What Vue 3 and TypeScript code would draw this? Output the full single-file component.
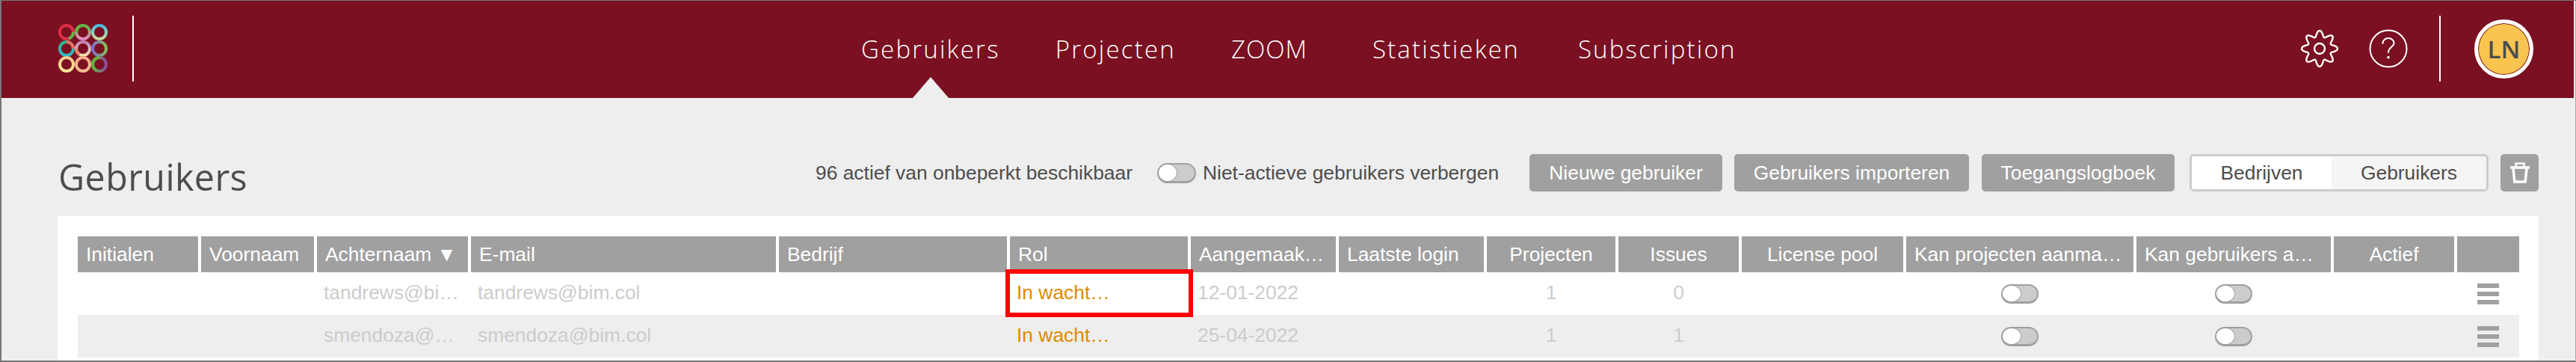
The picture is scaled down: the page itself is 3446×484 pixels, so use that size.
<script setup lang="ts">
const nav: string[] = ['Gebruikers', 'Projecten', 'ZOOM', 'Statistieken', 'Subscription']
const columns: { label: string; center?: boolean }[] = [
  { label: 'Initialen' },
  { label: 'Voornaam' },
  { label: 'Achternaam ▼' },
  { label: 'E-mail' },
  { label: 'Bedrijf' },
  { label: 'Rol' },
  { label: 'Aangemaak…' },
  { label: 'Laatste login' },
  { label: 'Projecten', center: true },
  { label: 'Issues', center: true },
  { label: 'License pool', center: true },
  { label: 'Kan projecten aanma…' },
  { label: 'Kan gebruikers a…' },
  { label: 'Actief', center: true },
  { label: '', center: true },
]
const rows = [
  { name: 'tandrews@bi…', mail: 'tandrews@bim.col', date: '12-01-2022', projects: 1, issues: 0 },
  { name: 'smendoza@…', mail: 'smendoza@bim.col', date: '25-04-2022', projects: 1, issues: 1 },
]
const rings = [
  { cx: 89, cy: 43, a: '#e0283f', b: '#d8384f', x2: 1, y2: 1 },
  { cx: 111, cy: 43, a: '#62b445', b: '#e58fc0', x2: 0, y2: 1 },
  { cx: 133, cy: 43, a: '#45bde0', b: '#c9dca0', x2: 0, y2: 1 },
  { cx: 89, cy: 65, a: '#2cb88a', b: '#2fb8c8', x2: 0, y2: 1 },
  { cx: 111, cy: 65, a: '#c77fb8', b: '#f0e2b0', x2: 0, y2: 1 },
  { cx: 133, cy: 65, a: '#7a6fc8', b: '#84c05a', x2: 1, y2: 0 },
  { cx: 89, cy: 86, a: '#f5c98f', b: '#fde596', x2: 0, y2: 1 },
  { cx: 111, cy: 86, a: '#f3a98a', b: '#f8bd94', x2: 0, y2: 1 },
  { cx: 133, cy: 86, a: '#62b445', b: '#8d4a9b', x2: 1, y2: 0 },
]
const arcs = [
  { d: 'M111 34A9 9 0 0 0 102 43', c: '#62b445' },
  { d: 'M98 43A9 9 0 0 1 92 51.500', c: '#62b445' },
  { d: 'M89 56A9 9 0 0 1 98 65', c: '#ee6f62' },
  { d: 'M102 65A9 9 0 0 0 107 73', c: '#ee7f6a' },
  { d: 'M133 77A9 9 0 0 0 124 86A9 9 0 0 0 129 94', c: '#62b445' },
]
const gear: string = (() => {
  const pts: string[] = []
  for (let i = 0; i < 240; i++) {
    const t = (i / 240) * Math.PI * 2
    const r = 20 + 4 * Math.cos(8 * t)
    pts.push(`${(26 + r * Math.sin(t)).toFixed(2)} ${(26 - r * Math.cos(t)).toFixed(2)}`)
  }
  return `M${pts.join('L')}Z`
})()
</script>

<template>
  <div class="page">
    <header class="topbar">
      <div class="brand">
        <svg class="logo" viewBox="76 21 70 88" width="70" height="88">
          <defs>
            <linearGradient v-for="(r, i) in rings" :id="`lg${i}`" :key="i" x1="0" y1="0" :x2="r.x2" :y2="r.y2">
              <stop offset="0" :stop-color="r.a" />
              <stop offset="1" :stop-color="r.b" />
            </linearGradient>
          </defs>
          <circle v-for="(r, i) in rings" :key="i" :cx="r.cx" :cy="r.cy" r="9" fill="none" :stroke="`url(#lg${i})`" stroke-width="4" />
          <path v-for="a in arcs" :key="a.d" :d="a.d" fill="none" :stroke="a.c" stroke-width="4" />
        </svg>
      </div>
      <nav class="nav">
        <a v-for="(n, i) in nav" :key="n" class="nav-item" :class="{ active: i === 0 }">{{ n }}</a>
      </nav>
      <div class="tools">
        <svg width="52" height="52" viewBox="0 0 52 52" fill="none" stroke="#fff" stroke-width="2.400">
          <circle cx="26" cy="26" r="7" />
          <path :d="gear" />
        </svg>
        <svg class="help" width="52" height="52" viewBox="0 0 52 52" fill="none" stroke="#fff" stroke-width="2" stroke-linecap="round">
          <circle cx="26" cy="26" r="24.500" />
          <path d="M18.500 19c0-4 3.400-7 7.500-7s7.500 3 7.500 6.500c0 5-7.500 6-7.500 12.500" />
          <circle cx="26" cy="37.700" r="1.800" fill="#fff" stroke="none" />
        </svg>
        <span class="rule"></span>
        <div class="avatar"><span>LN</span></div>
      </div>
    </header>

    <main class="content">
      <div class="title-row">
        <h1 class="title">Gebruikers</h1>
        <span class="count">96 actief van onbeperkt beschikbaar</span>
        <div class="switch-label">
          <span class="switch"><i></i></span>
          <span>Niet-actieve gebruikers verbergen</span>
        </div>
        <button class="btn b1">Nieuwe gebruiker</button>
        <button class="btn b2">Gebruikers importeren</button>
        <button class="btn b3">Toegangslogboek</button>
        <div class="segment">
          <span class="seg on">Bedrijven</span>
          <span class="seg">Gebruikers</span>
        </div>
        <button class="btn trash">
          <svg width="28" height="28" viewBox="0 0 28 28" fill="none" stroke="#fff">
            <path d="M8.500 6V1.500h11V6" stroke-width="2.500" />
            <path d="M1 7h26" stroke-width="3.500" />
            <path d="M5 8l1.800 18h14.400L23 8" stroke-width="3.500" />
          </svg>
        </button>
      </div>

      <section class="panel">
        <div class="grid head">
          <div v-for="c in columns" :key="c.label" class="th" :class="{ center: c.center }">{{ c.label }}</div>
        </div>
        <div v-for="r in rows" :key="r.mail" class="grid row">
          <div class="td"></div>
          <div class="td"></div>
          <div class="td muted">{{ r.name }}</div>
          <div class="td muted">{{ r.mail }}</div>
          <div class="td"></div>
          <div class="td role">In wacht…</div>
          <div class="td muted">{{ r.date }}</div>
          <div class="td"></div>
          <div class="td muted center">{{ r.projects }}</div>
          <div class="td muted center">{{ r.issues }}</div>
          <div class="td"></div>
          <div class="td center"><span class="switch small"><i></i></span></div>
          <div class="td center"><span class="switch small"><i></i></span></div>
          <div class="td"></div>
          <div class="td center"><span class="menu"><b></b><b></b><b></b></span></div>
        </div>
        <div class="marker"></div>
      </section>
    </main>
  </div>
</template>

<style scoped>
.page {
  box-sizing: border-box;
  width: 3446px;
  height: 484px;
  overflow: hidden;
  background: #eeeeee;
  border-top: 1px solid #777;
  border-left: 2px solid #777;
  border-right: 1px solid #aaa;
  border-bottom: 2px solid #777;
  padding-right: 2px;
  font-family: "Liberation Sans", Arial, sans-serif;
}
.topbar {
  box-sizing: border-box;
  height: 130px;
  padding-bottom: 2px;
  background: #7a1022;
  display: flex;
  align-items: center;
}
.brand {
  box-sizing: border-box;
  width: 177px;
  height: 88px;
  padding-left: 74px;
  border-right: 2px solid #fff;
  display: flex;
  flex: none;
}
.nav {
  display: flex;
  margin-left: 973px;
  gap: 74px;
  align-self: stretch;
}
.nav-item {
  position: relative;
  display: flex;
  align-items: center;
  color: #fff;
  font-family: "Open Sans", sans-serif;
  font-weight: 300;
  font-size: 33px;
  letter-spacing: 2.200px;
}
.nav-item:nth-child(3) {
  letter-spacing: 1px;
  margin-right: 13px;
}
.nav-item:nth-child(4) {
  margin-right: 4px;
}
.nav-item.active::after {
  content: "";
  position: absolute;
  left: 50%;
  bottom: -2px;
  margin-left: -24px;
  border-left: 24px solid transparent;
  border-right: 24px solid transparent;
  border-bottom: 28px solid #eeeeee;
}
.tools {
  margin-left: auto;
  display: flex;
  align-items: center;
  padding-right: 54px;
}
.help {
  margin-left: 40px;
}
.rule {
  width: 2px;
  height: 88px;
  background: #fff;
  margin: 0 45px 0 42px;
}
.avatar {
  box-sizing: border-box;
  width: 79px;
  height: 79px;
  border-radius: 50%;
  border: 5px solid #fff;
  background: #f9c550;
  box-shadow: inset 0 0 0 1px #7a1022;
  display: flex;
  align-items: center;
  justify-content: center;
  color: #4d4d4d;
  font-family: "Open Sans", sans-serif;
  font-weight: 600;
  font-size: 33px;
}
.content {
  padding: 0 47px 0 75px;
}
.title-row {
  box-sizing: border-box;
  height: 158px;
  padding-top: 42px;
  display: flex;
  align-items: center;
}
.title {
  margin: 10px 0 0;
  padding-left: 1px;
  box-sizing: border-box;
  width: 1014px;
  flex: none;
  color: #4d4d4d;
  font-family: "Open Sans", sans-serif;
  font-weight: 400;
  font-size: 48.400px;
  letter-spacing: 0.400px;
}
.count {
  color: #4d4d4d;
  font-size: 26.400px;
  width: 457px;
  flex: none;
}
.switch-label {
  display: flex;
  align-items: center;
  gap: 9px;
  color: #4d4d4d;
  font-size: 26.400px;
  width: 498px;
  flex: none;
}
.switch {
  box-sizing: border-box;
  display: inline-flex;
  width: 52px;
  height: 27px;
  border: 2px solid #a0a0a0;
  border-bottom-width: 3px;
  border-radius: 14px;
  background: #cccccc;
}
.switch i {
  width: 24px;
  height: 100%;
  background: #fff;
  border-radius: 50%;
  box-shadow: 0 0 0 1px #a0a0a0;
}
.btn {
  height: 50px;
  border: 0;
  border-radius: 5px;
  background: #a0a0a0;
  color: #fff;
  font-family: inherit;
  font-size: 26.400px;
  padding: 0;
  flex: none;
}
.b1 { width: 258px; margin-right: 16px; }
.b2 { width: 314px; margin-right: 17px; }
.b3 { width: 258px; margin-right: 20px; }
.segment {
  box-sizing: border-box;
  width: 400px;
  height: 50px;
  flex: none;
  display: grid;
  grid-template-columns: 187px 1fr;
  border: 3px solid #ccc;
  border-radius: 6px;
  overflow: hidden;
  font-size: 26.400px;
  color: #4d4d4d;
}
.seg {
  background: #f5f5f5;
  display: flex;
  align-items: center;
  justify-content: center;
}
.seg.on { background: #fff; }
.trash {
  width: 51px;
  margin-left: 16px;
  display: flex;
  align-items: center;
  justify-content: center;
}
.panel {
  position: relative;
  background: #fff;
  padding: 27px 26px 3px 27px;
  height: 193px;
  box-sizing: border-box;
}
.grid {
  display: grid;
  grid-template-columns: 161px 151px 202px 408px 305px 238px 194px 194px 172px 161px 216px 304px 260px 161px 83px;
  column-gap: 4px;
}
.head { height: 48px; }
.th {
  background: #a0a0a0;
  color: #fff;
  font-size: 26.400px;
  line-height: 48px;
  padding: 0 11px;
  white-space: nowrap;
  overflow: hidden;
}
.th.center { text-align: center; padding: 0 6px; }
.row { height: 57px; }
.row:nth-child(odd) { background: #eeeeee; }
.td {
  font-size: 26.400px;
  line-height: 55px;
  padding: 0 9px;
  white-space: nowrap;
  overflow: hidden;
  min-width: 0;
}
.td.center { text-align: center; }
.muted { color: #cccccc; }
.role { color: #e08a00; }
.td .switch.small {
  width: 50px;
  height: 26px;
  vertical-align: middle;
}
.menu {
  display: inline-flex;
  flex-direction: column;
  gap: 5px;
  width: 29px;
  vertical-align: middle;
}
.menu b {
  height: 6px;
  background: #a0a0a0;
}
.marker {
  position: absolute;
  left: 1268px;
  top: 71px;
  width: 251px;
  height: 64px;
  box-sizing: border-box;
  border: 6px solid #ff0000;
}
</style>
